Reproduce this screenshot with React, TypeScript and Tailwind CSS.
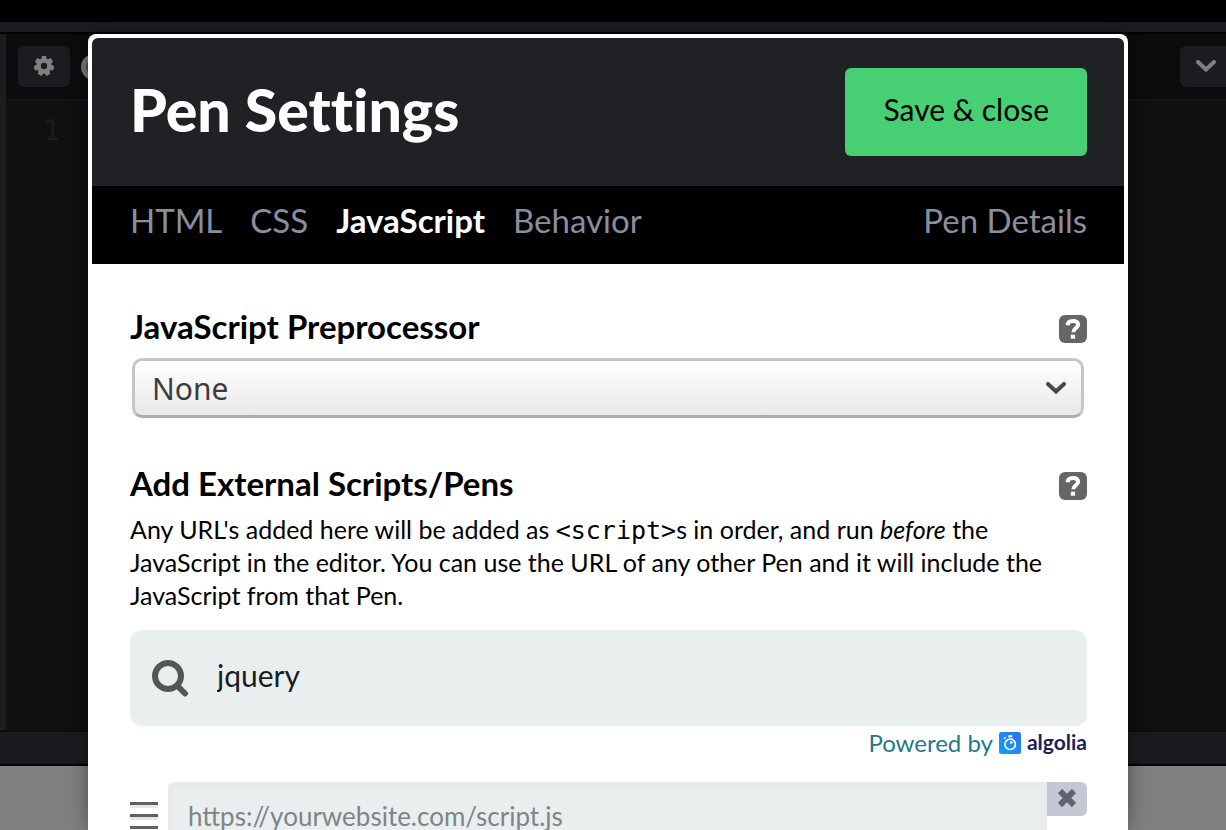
import { useState } from "react";

const TABS = ["HTML", "CSS", "JavaScript", "Behavior"];
const GEAR_TEETH = [0, 1, 2, 3, 4, 5, 6];

function Chevron({ className }: { className: string }) {
  return (
    <svg viewBox="0 0 20 12" className={className} fill="none" stroke="currentColor" strokeWidth="4" strokeLinecap="round" strokeLinejoin="miter" aria-hidden="true">
      <path d="M2 2l8 7.500L18 2" />
    </svg>
  );
}

function Gear() {
  return (
    <svg viewBox="0 0 20 20" className="size-5" fill="currentColor" aria-hidden="true">
      <circle cx="10" cy="10" r="5.500" fill="none" stroke="currentColor" strokeWidth="4.600" />
      {GEAR_TEETH.map((n) => (
        <path key={n} d="M7.300 3.500L7.900 0h4.200l.6 3.500z" transform={`rotate(${(n * 360) / 7} 10 10)`} />
      ))}
    </svg>
  );
}

function HelpButton({ label }: { label: string }) {
  return (
    <button type="button" aria-label={label} className="flex size-7 items-center justify-center rounded-md bg-[#666666] text-white">
      <svg viewBox="0 0 28 28" className="size-7" fill="none" aria-hidden="true">
        <path d="M8.500 10.200C8.800 6.900 11 5.900 14 5.900c3.100 0 5.100 1.500 5.100 3.900 0 3.400-4.800 3.700-4.800 7.500" stroke="currentColor" strokeWidth="4" />
        <path d="M11.800 19.700h4.300v4h-4.300z" fill="currentColor" />
      </svg>
    </button>
  );
}

function AlgoliaMark() {
  return (
    <svg viewBox="0 0 22 22" className="size-[22px]" aria-hidden="true">
      <defs>
        <linearGradient id="algolia-blue" x1="1" y1="0" x2="0" y2="1">
          <stop offset="0" stopColor="#2d72ec" />
          <stop offset="1" stopColor="#0fa0ff" />
        </linearGradient>
      </defs>
      <rect width="22" height="22" rx="2.500" fill="url(#algolia-blue)" />
      <circle cx="11.200" cy="12.300" r="5.200" fill="none" stroke="white" strokeWidth="1.700" />
      <path d="M9.300 3.200h4v2.200h-4z" fill="white" />
      <path d="M5.100 6.700l1.600-1.500" stroke="white" strokeWidth="1.500" />
      <path d="M11.200 12.300V9a3.300 3.300 0 0 1 2.900 1.700z" fill="white" />
    </svg>
  );
}

function Workspace() {
  return (
    <div className="flex h-screen flex-col bg-black [grid-area:1/1]">
      <div className="mt-[22px] h-[10px] bg-[#1c1d21]" />
      <div className="mt-0.5 flex flex-1 border-b-2 border-[#0a0b0c] bg-[#0f1012]">
        <div className="w-1.5 bg-[#1c1d21]" />
        <div className="flex-1">
          <div className="flex h-[67px] items-start justify-between border-b-2 border-[#131417] bg-[#0c0c0e] pt-3 pl-3">
            <div className="flex items-center gap-[11px]">
              <button type="button" aria-label="Editor settings" className="flex h-[41px] w-[52px] items-center justify-center rounded-md bg-[#1b1c20] pb-0.5 text-[#808080]">
                <Gear />
              </button>
              <span className="size-[26px] rounded-full border-5 border-[#77797e] bg-[#6b4a1c]" />
            </div>
            <button type="button" aria-label="Editor menu" className="flex h-[41px] w-[46px] items-center justify-center rounded-l-md bg-[#1b1c20] pb-0.5 pl-1.5 text-[#808080]">
              <Chevron className="h-3 w-5" />
            </button>
          </div>
          <div className="w-[54px] pt-3 text-right font-['DejaVu_Sans_Mono',monospace] text-[28px] leading-9 text-[#1b1c20]">1</div>
        </div>
      </div>
      <div className="h-8 bg-[#1a1b1f]" />
      <div className="mt-0.5 h-16 bg-[#808080]" />
    </div>
  );
}

export default function App() {
  const [tab, setTab] = useState("JavaScript");
  const [query, setQuery] = useState("jquery");
  const [url, setUrl] = useState("");

  return (
    <div className="grid h-screen grid-cols-1 overflow-hidden font-[Lato,sans-serif] text-black">
      <Workspace />
      <section
        role="dialog"
        aria-labelledby="settings-title"
        className="z-10 mt-[34px] mr-[98px] ml-[88px] overflow-hidden rounded-t-lg border-4 border-b-0 border-white bg-white shadow-[0_0_20px_rgba(0,0,0,0.4)] [grid-area:1/1]"
      >
        <header className="flex h-[148px] items-center justify-between rounded-t-md bg-[#202125] pr-[37px] pl-[38px]">
          <h1 id="settings-title" className="pb-1 text-[59px] leading-[60px] font-black text-white [font-variant-ligatures:none]">Pen Settings</h1>
          <button type="button" className="h-[88px] rounded-md bg-[#47cf73] px-[38px] pb-1.5 text-[30px]">Save &amp; close</button>
        </header>
        <nav aria-label="Settings" className="flex h-[78px] items-center gap-7 bg-black pr-[37px] pb-2 pl-[38px] text-[33px] text-[#8b8e9e]">
          {TABS.map((name) => (
            <a
              key={name}
              href={`#${name.toLowerCase()}`}
              onClick={() => setTab(name)}
              className={tab === name ? "font-bold text-white" : ""}
            >
              {name}
            </a>
          ))}
          <a href="#details" className="ml-auto">Pen Details</a>
        </nav>

        <div className="pt-11 pr-[37px] pl-[38px]">
          <div className="flex h-[42px] items-center justify-between">
            <label htmlFor="preprocessor" className="pb-1.5 text-[33px] leading-10 font-bold">JavaScript Preprocessor</label>
            <HelpButton label="Preprocessor help" />
          </div>
          <div className="mt-2 mr-[3px] ml-0.5 grid items-center">
            <select
              id="preprocessor"
              defaultValue="None"
              className="h-[60px] w-full appearance-none rounded-[10px] border-3 border-[#c6c6c6] border-b-[#adadad] bg-linear-to-b from-white to-[#eae9e8] px-[17px] font-['Noto_Sans',sans-serif] text-[30px] text-[#3c3c3c] [grid-area:1/1]"
            >
              <option>None</option>
              <option>Babel</option>
              <option>TypeScript</option>
              <option>CoffeeScript</option>
              <option>LiveScript</option>
            </select>
            <Chevron className="pointer-events-none mr-[18px] h-3 w-5 justify-self-end text-[#484848] [grid-area:1/1]" />
          </div>

          <div className="mt-[47px] flex h-[42px] items-center justify-between">
            <h2 className="pb-1.5 text-[33px] leading-10 font-bold">Add External Scripts/Pens</h2>
            <HelpButton label="External scripts help" />
          </div>
          <p className="mt-1.5 text-[25px] leading-[33px]">
            Any URL's added here will be added as <code className="font-['DejaVu_Sans_Mono',monospace] text-[25px] leading-none">&lt;script&gt;</code>s in order, and run <em>before</em> the JavaScript in the editor. You can use the URL of any other Pen and it will include the JavaScript from that Pen.
          </p>

          <div className="mt-[18px] flex h-24 items-center gap-7 rounded-xl bg-[#e9efef] pl-[21px]">
            <svg viewBox="0 0 38 38" className="size-[38px]" fill="none" stroke="#545556" strokeWidth="6" strokeLinecap="round" aria-hidden="true">
              <circle cx="17" cy="17" r="13" />
              <path d="M27.500 28l6.500 6.500" />
            </svg>
            <input
              type="text"
              aria-label="Search scripts"
              value={query}
              onChange={(e) => setQuery(e.target.value)}
              className="h-20 flex-1 bg-transparent pb-1.5 text-[30px] text-[#1c1c1c] outline-none"
            />
          </div>
          <a href="#algolia" className="flex h-[34px] items-center justify-end gap-1.5 text-[24px] text-[#1d7a8d]">
            Powered by
            <AlgoliaMark />
            <span className="pb-0.5 text-[21px] font-bold text-[#182359]">algolia</span>
          </a>

          <div className="mt-[22px] flex items-start">
            <button type="button" aria-label="Reorder script" className="mt-5 flex w-7 flex-col gap-[9px]">
              <span className="h-[3px] w-full bg-[#606060] shadow-[0_3px_0_#e6e6e6]" />
              <span className="h-[3px] w-full bg-[#606060] shadow-[0_3px_0_#e6e6e6]" />
              <span className="h-[3px] w-full bg-[#606060]" />
            </button>
            <input
              type="url"
              aria-label="Script URL"
              placeholder="https://yourwebsite.com/script.js"
              value={url}
              onChange={(e) => setUrl(e.target.value)}
              className="ml-2.5 h-[68px] flex-1 rounded-l-md border-6 border-[#e7ebee] bg-[#e9efef] px-3.5 text-[26px] text-[#1c1c1c] outline-none placeholder:text-[#808487]"
            />
            <button type="button" aria-label="Remove script" className="flex h-[34px] w-10 items-center justify-center rounded-r-md bg-[#c5c7d5] pb-0.5 text-[#616371]">
              <svg viewBox="0 0 18 18" className="size-[18px]" fill="none" stroke="currentColor" strokeWidth="6" aria-hidden="true">
                <path d="M2 2l14 14M16 2L2 16" />
              </svg>
            </button>
          </div>
        </div>
      </section>
    </div>
  );
}
